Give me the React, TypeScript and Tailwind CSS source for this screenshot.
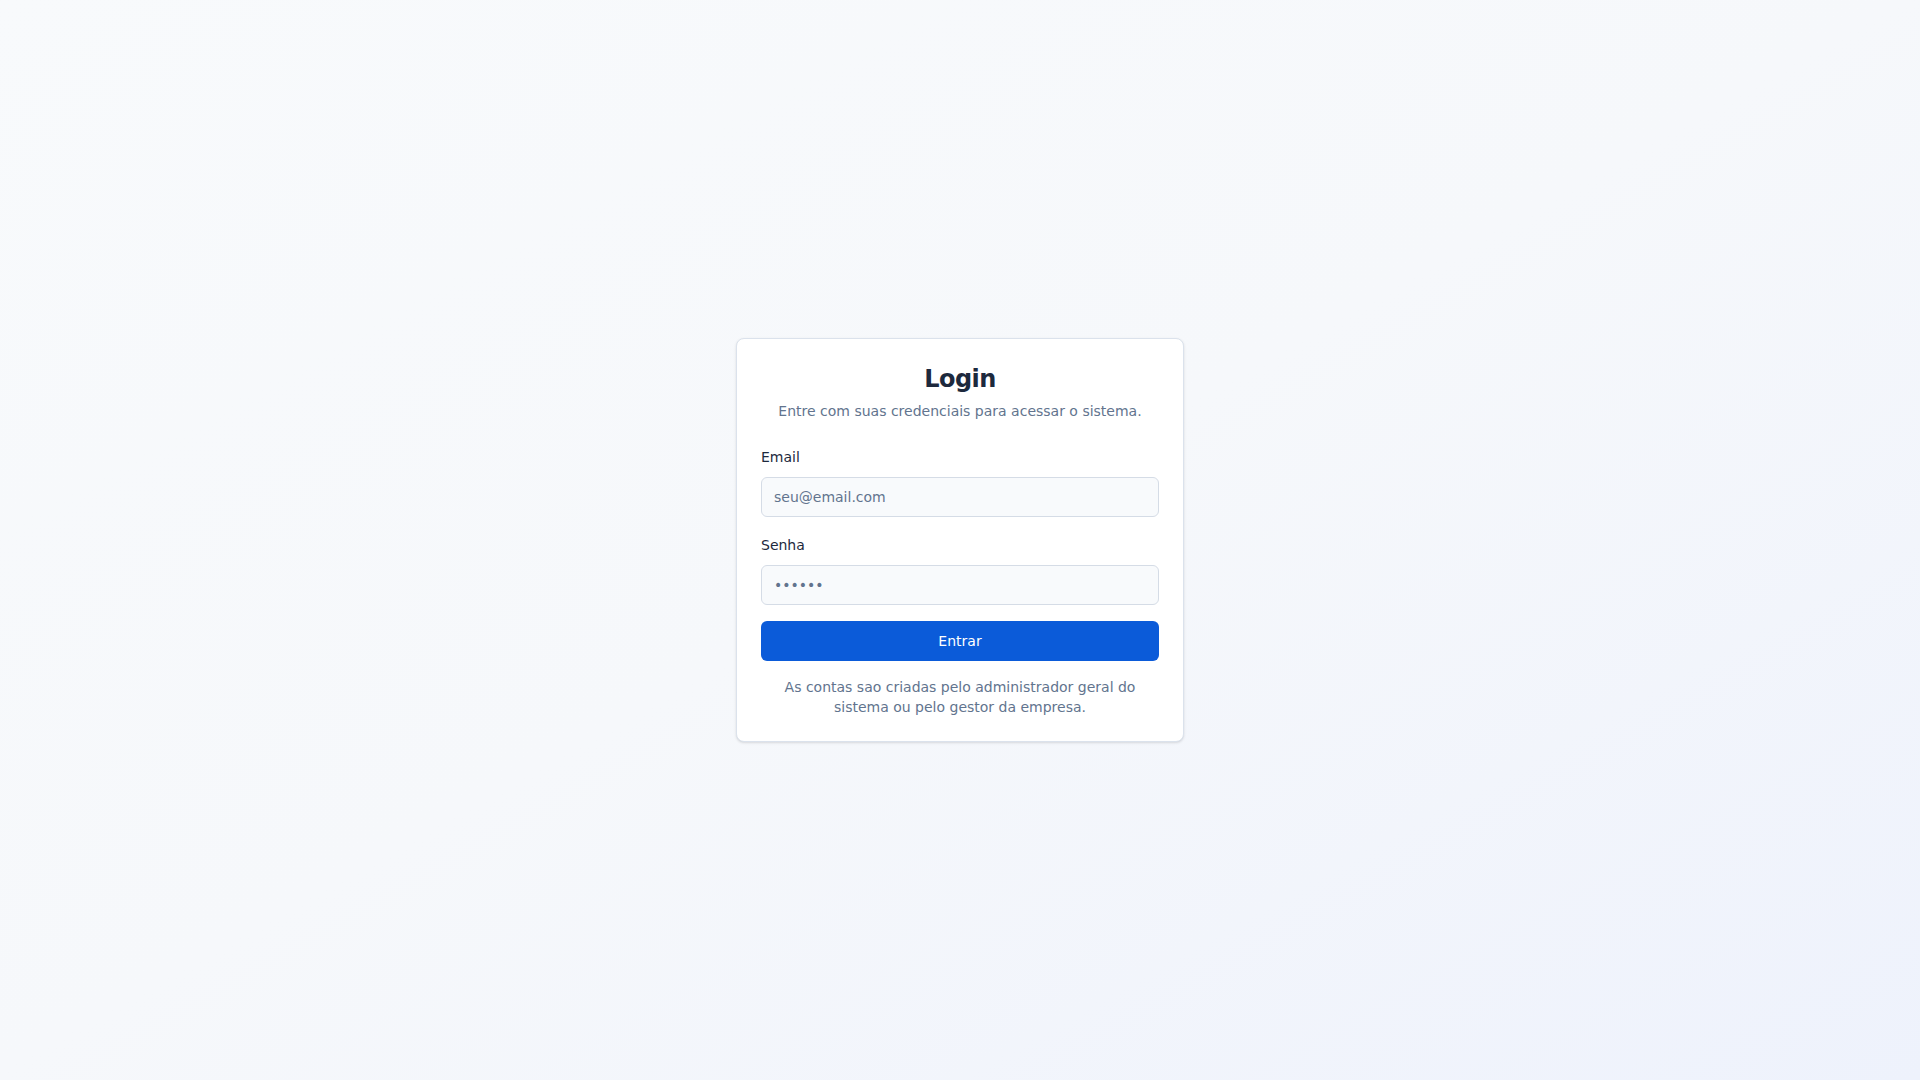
export default function App() {
  return (
    <div
      className="flex min-h-screen items-center justify-center bg-gradient-to-br from-[#f8fafc] via-[#f6f8fb] to-[#eef2fc] px-4 text-slate-800"
      style={{ fontFamily: '"DejaVu Sans", sans-serif' }}
    >
      <div className="w-[448px] rounded-lg border border-[#dbe2ec] bg-white p-6 shadow-sm">
        <div className="text-center">
          <h1 className="text-2xl font-bold tracking-tight text-slate-800">Login</h1>
          <p className="mt-1.5 text-sm text-slate-500">
            Entre com suas credenciais para acessar o sistema.
          </p>
        </div>

        <form className="mt-[26px]" onSubmit={(e) => e.preventDefault()}>
          <label className="block text-sm text-slate-800">Email</label>
          <input
            type="email"
            placeholder="seu@email.com"
            className="mt-2.5 h-10 w-full rounded-md border border-[#d5dce6] bg-slate-50 px-3 text-sm text-slate-800 placeholder:text-slate-500 outline-none"
          />

          <label className="mt-[18px] block text-sm text-slate-800">Senha</label>
          <input
            type="password"
            placeholder="••••••"
            className="mt-2.5 h-10 w-full rounded-md border border-[#d5dce6] bg-slate-50 px-3 text-sm text-slate-800 placeholder:text-slate-500 outline-none"
          />

          <button
            type="submit"
            className="mt-4 h-10 w-full rounded-md bg-[#0b5bd9] text-sm text-white"
          >
            Entrar
          </button>
        </form>

        <p className="mt-4 text-center text-sm text-slate-500">
          As contas sao criadas pelo administrador geral do sistema ou pelo gestor da empresa.
        </p>
      </div>
    </div>
  );
}
